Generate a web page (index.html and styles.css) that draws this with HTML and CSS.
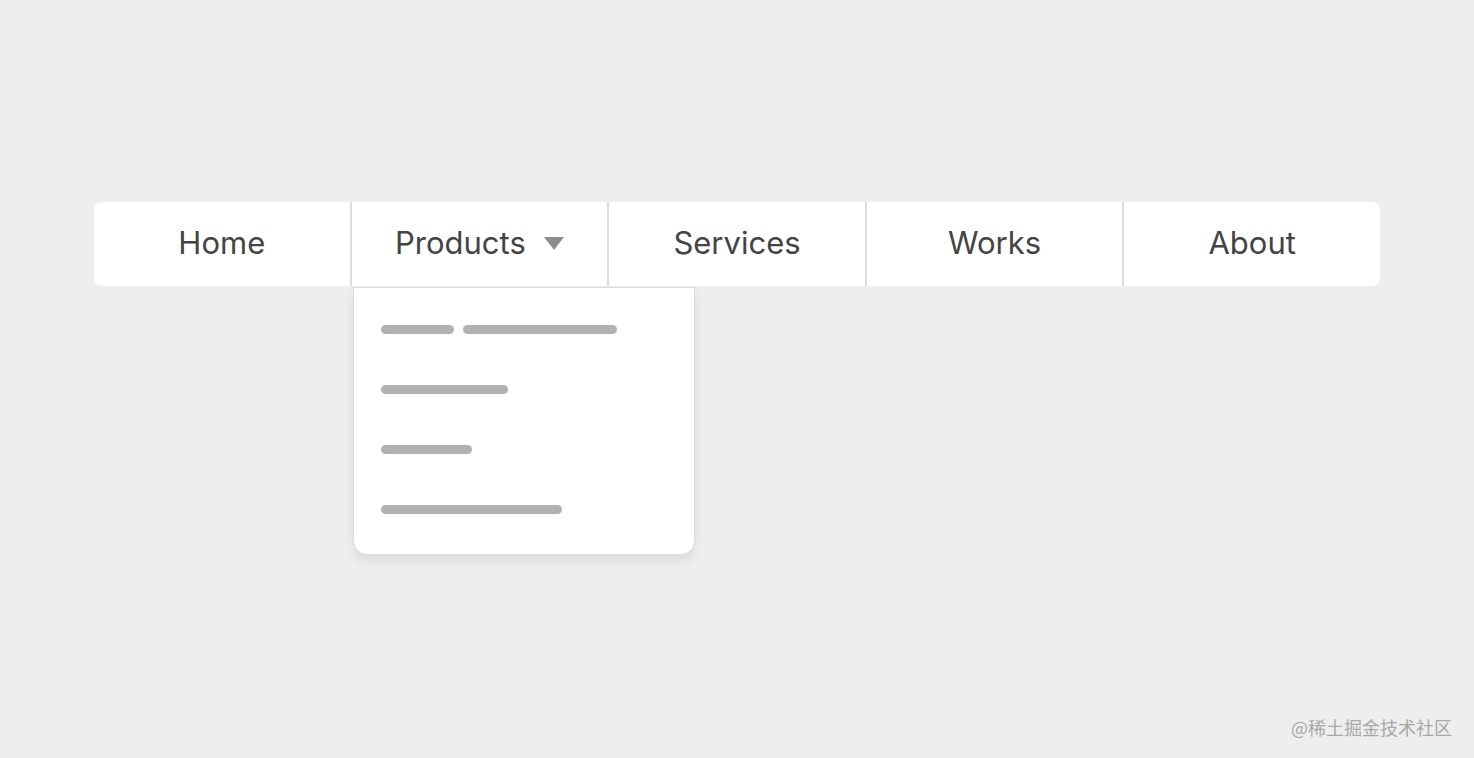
FILE: index.html
```html
<!DOCTYPE html>
<html lang="en">
<head>
  <meta charset="UTF-8" />
  <meta name="viewport" content="width=device-width, initial-scale=1.0" />
  <title>Dropdown Menu</title>
  <link rel="stylesheet" href="styles.css">
</head>
<body>
  <main class="stage">
    <nav class="menu">
      <a class="menu-item" href="#">Home</a>
      <div class="menu-item has-drop">
        <span>Products</span>
        <span class="caret"></span>
        <div class="dropdown">
          <div class="drop-row"><span class="bar w72"></span><span class="bar w154"></span></div>
          <div class="drop-row"><span class="bar w127"></span></div>
          <div class="drop-row"><span class="bar w91"></span></div>
          <div class="drop-row"><span class="bar w181"></span></div>
        </div>
      </div>
      <a class="menu-item" href="#">Services</a>
      <a class="menu-item" href="#">Works</a>
      <a class="menu-item" href="#">About</a>
    </nav>
  </main>

  <footer class="mark">@稀土掘金技术社区</footer>
</body>
</html>
```

FILE: styles.css
```css
body { margin: 0; background: #eeeeee; font-family: "Inter", "Open Sans", sans-serif; color: #444; height: 758px; position: relative; overflow: hidden; }
.stage { padding: 202px 94px 0 94px; }
.menu { display: flex; height: 84px; background: #fff; border-radius: 8px; }
.menu-item { flex: 1; display: flex; align-items: center; justify-content: center; gap: 18px; font-size: 31px; color: #444; text-decoration: none; border-left: 2px solid #dcdcdc; position: relative; padding-bottom: 4px; box-sizing: border-box; }
.menu-item:first-child { border-left: none; }
.caret { width: 0; height: 0; border-left: 10px solid transparent; border-right: 10px solid transparent; border-top: 13px solid #8c8c8c; margin-top: 2px; }
.dropdown { position: absolute; top: 85px; left: 1px; width: 342px; height: 268px; background: #fff; border: 1px solid #dcdcdc; border-radius: 0 0 14px 14px; box-shadow: 0 6px 10px rgba(0,0,0,0.08); padding-top: 37px; box-sizing: border-box; }
.drop-row { display: flex; gap: 9px; padding-left: 27px; height: 60px; }
.bar { display: block; height: 9px; background: #b1b1b1; border-radius: 5px; }
.w72 { width: 73px; }
.w154 { width: 154px; }
.w127 { width: 127px; }
.w91 { width: 91px; }
.w181 { width: 181px; }
.mark { position: absolute; right: 22px; top: 714px; font-size: 18px; color: #a8a8a8; font-family: "Noto Sans CJK SC", sans-serif; }
```
